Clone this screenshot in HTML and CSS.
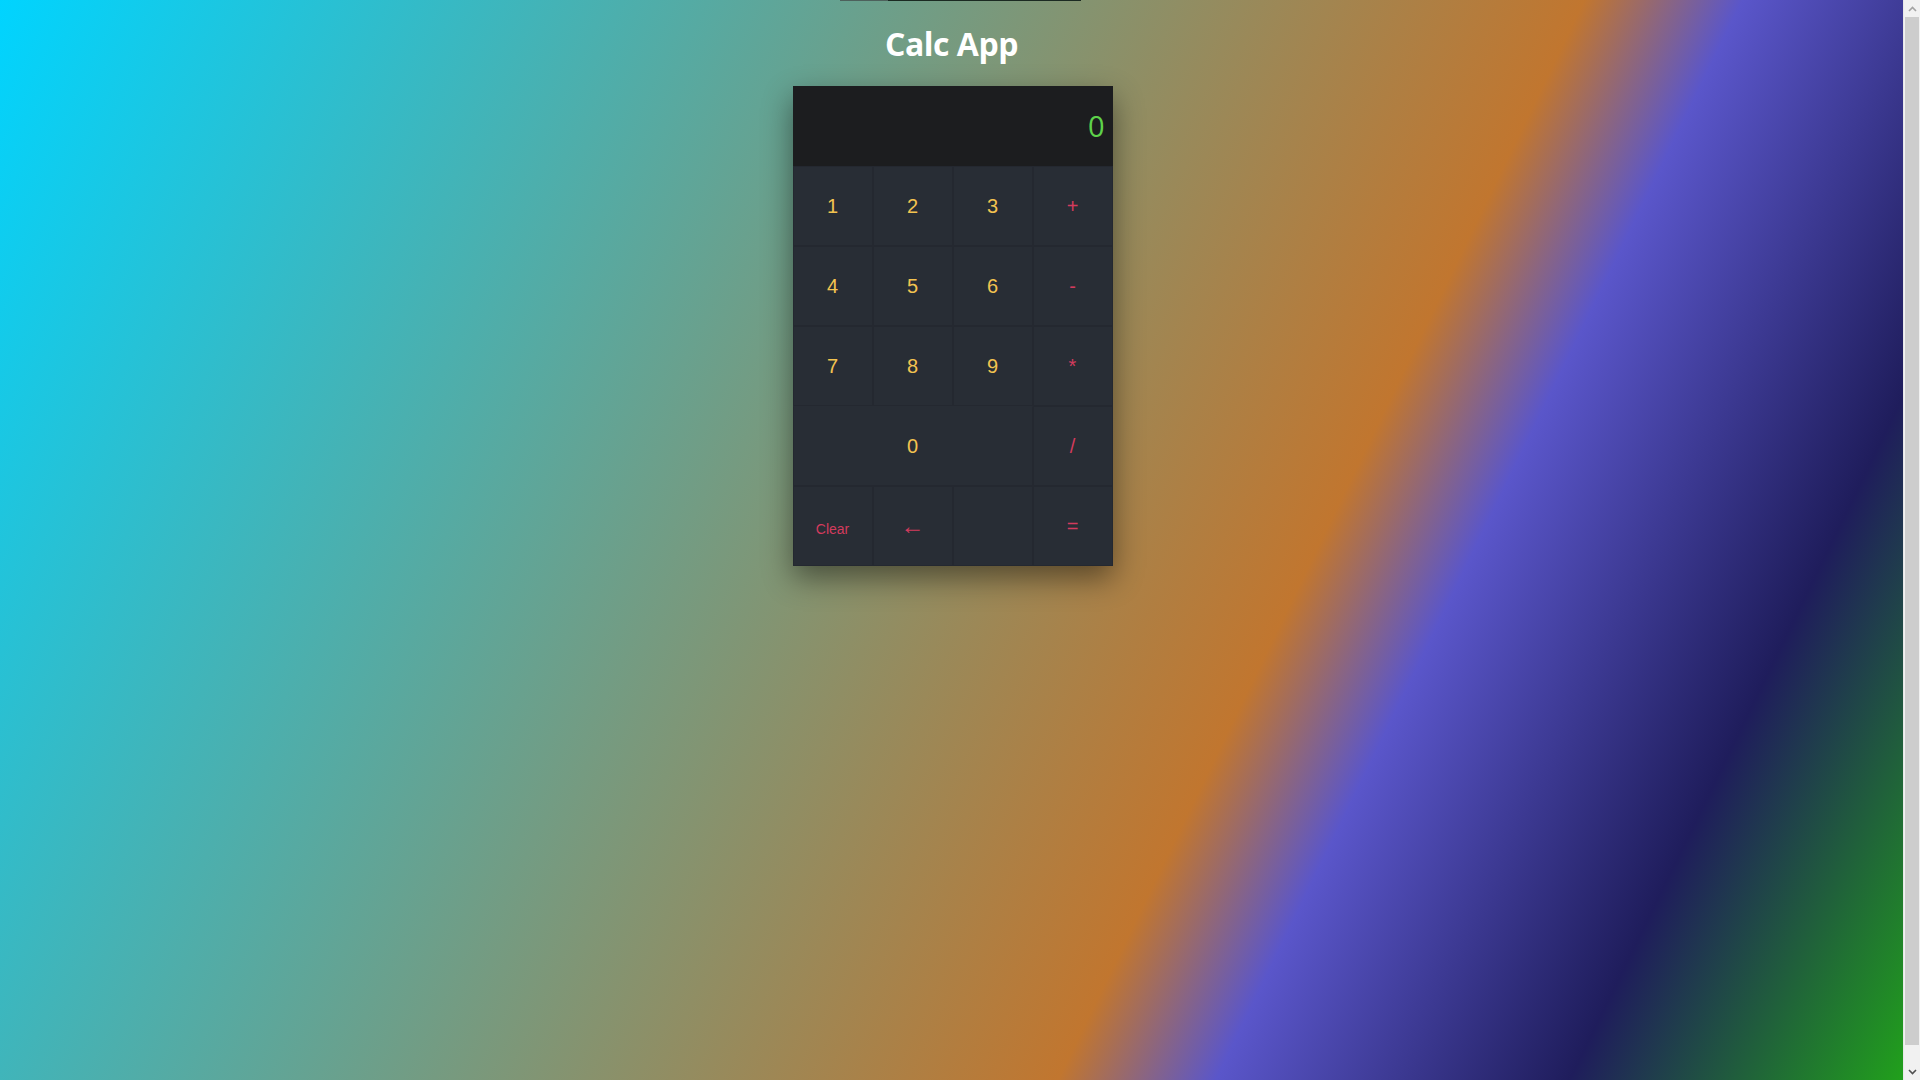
FILE: index.html
```html
<!DOCTYPE html>
<html lang="en">
<head>
<meta charset="utf-8">
<title>Calc App</title>
<link rel="stylesheet" href="styles.css">
</head>
<body>
<div class="topline"><span class="topline-a"></span><span class="topline-b"></span></div>
<h1 class="title">Calc App</h1>
<div class="calc">
  <div class="display">0</div>
  <div class="keys">
    <button class="key num">1</button>
    <button class="key num">2</button>
    <button class="key num">3</button>
    <button class="key op">+</button>
    <button class="key num">4</button>
    <button class="key num">5</button>
    <button class="key num">6</button>
    <button class="key op">-</button>
    <button class="key num">7</button>
    <button class="key num">8</button>
    <button class="key num">9</button>
    <button class="key op">*</button>
    <button class="key num zero"><span class="zero-label">0</span></button>
    <button class="key op">/</button>
    <button class="key op clear">Clear</button>
    <button class="key op arrow">&larr;</button>
    <button class="key empty"></button>
    <button class="key op">=</button>
  </div>
</div>
<div class="scrollbar">
  <div class="sb-btn">
    <svg width="9" height="6" viewBox="0 0 9 6"><path d="M1 5 L4.5 1.5 L8 5" fill="none" stroke="#a3a3a3" stroke-width="1.6"/></svg>
  </div>
  <div class="sb-track"><div class="sb-thumb"></div></div>
  <div class="sb-btn">
    <svg width="9" height="6" viewBox="0 0 9 6"><path d="M1 1 L4.5 4.5 L8 1" fill="none" stroke="#505050" stroke-width="1.6"/></svg>
  </div>
</div>
</body>
</html>
```
FILE: styles.css
```css
html {
  margin-right: 17px;
  min-height: 100%;
  background: linear-gradient(116deg, #00d4ff 0%, #c1762f 65%, #5a56ca 71.5%, #1f1d5c 86%, #21a31a 100%);
}

body {
  margin: 8px;
  min-height: 100vh;
  font-family: "Open Sans", "Noto Sans", sans-serif;
}

.topline {
  position: absolute;
  top: 0;
  left: 840px;
  width: 241px;
  height: 1px;
  display: flex;
}

.topline-a {
  width: 48px;
  background: #4d615c;
}

.topline-b {
  flex: 1;
  background: #1b2a22;
}

.title {
  margin: 14px 0 21px;
  text-align: center;
  color: #ffffff;
  font-size: 32px;
  font-weight: 700;
  letter-spacing: -0.5px;
}

.calc {
  width: 320px;
  margin: 0 auto;
  position: relative;
  left: 1px;
  background: #282d35;
  box-shadow: 0 12px 28px rgba(0, 0, 0, 0.45);
}

.display {
  height: 80px;
  box-sizing: border-box;
  background: #1c1d1f;
  color: #5ed24a;
  font-family: "Open Sans", sans-serif;
  font-weight: 400;
  font-size: 29px;
  text-align: right;
  padding: 0 8px;
  line-height: 80px;
}

.keys {
  display: grid;
  grid-template-columns: repeat(4, 80px);
  grid-auto-rows: 80px;
}

.key {
  box-sizing: border-box;
  margin: 0;
  padding: 0;
  border: 1px solid #242830;
  background: #282d35;
  font-family: "Liberation Sans", Arial, sans-serif;
  font-size: 20px;
  cursor: pointer;
}

.num {
  color: #f3c350;
}

.op {
  color: #d33b5d;
}

.clear {
  font-size: 14px;
  padding-top: 6px;
}

.arrow {
  font-size: 24px;
}

.zero {
  grid-column: span 3;
  text-align: left;
  border-color: #282d35 #242830 #242830 #242830;
}

.zero-label {
  display: inline-block;
  width: 80px;
  margin-left: 79px;
  text-align: center;
}

.scrollbar {
  position: fixed;
  top: 0;
  right: 0;
  width: 17px;
  height: 100vh;
  display: flex;
  flex-direction: column;
  background: #f1f1f1;
  border-left: 1px solid #e8e8e8;
  box-sizing: border-box;
}

.sb-btn {
  height: 17px;
  display: flex;
  align-items: center;
  justify-content: center;
}

.sb-track {
  flex: 1;
  display: flex;
  flex-direction: column;
}

.sb-thumb {
  height: 1028px;
  margin: 0 1px;
  background: #cdcdcd;
}
```
